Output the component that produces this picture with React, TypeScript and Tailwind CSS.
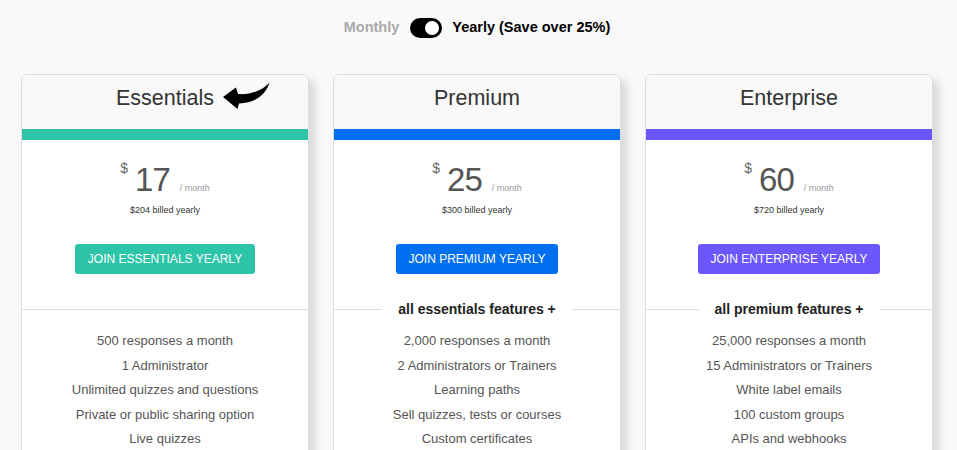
import React from "react";

type Plan = {
  name: string;
  bar: string;
  price: string;
  billed: string;
  button: string;
  heading?: string;
  features: string[];
  arrow?: boolean;
};

const plans: Plan[] = [
  {
    name: "Essentials",
    bar: "bg-[#2ec4a8]",
    price: "17",
    billed: "$204 billed yearly",
    button: "JOIN ESSENTIALS YEARLY",
    features: [
      "500 responses a month",
      "1 Administrator",
      "Unlimited quizzes and questions",
      "Private or public sharing option",
      "Live quizzes",
    ],
    arrow: true,
  },
  {
    name: "Premium",
    bar: "bg-[#0070f0]",
    price: "25",
    billed: "$300 billed yearly",
    button: "JOIN PREMIUM YEARLY",
    heading: "all essentials features +",
    features: [
      "2,000 responses a month",
      "2 Administrators or Trainers",
      "Learning paths",
      "Sell quizzes, tests or courses",
      "Custom certificates",
    ],
  },
  {
    name: "Enterprise",
    bar: "bg-[#6c56fd]",
    price: "60",
    billed: "$720 billed yearly",
    button: "JOIN ENTERPRISE YEARLY",
    heading: "all premium features +",
    features: [
      "25,000 responses a month",
      "15 Administrators or Trainers",
      "White label emails",
      "100 custom groups",
      "APIs and webhooks",
    ],
  },
];

function Arrow() {
  return (
    <svg
      width="52"
      height="28"
      viewBox="0 0 52 28"
      className="absolute left-full top-[-2px] ml-[6px]"
    >
      <path
        d="M3 15 L16 5.5 L18 12 C30 13 42 9 49.5 0.5 C46 12 36 21 19 21.5 L17.5 27 Z"
        fill="#000"
      />
    </svg>
  );
}

function Card({ p }: { p: Plan }) {
  return (
    <div className="w-[288px] shrink-0 rounded-[6px] border border-[#dddddd] bg-white shadow-[6px_6px_10px_rgba(0,0,0,0.13)] overflow-hidden">
      <div className="h-[54px] bg-[#f9f9f9] pt-[9px] text-center">
        <span className="relative inline-block text-[21.5px] leading-[28px] text-[#333]">
          {p.name}
          {p.arrow && <Arrow />}
        </span>
      </div>
      <div className={`h-[11px] ${p.bar}`} />
      <div className="pt-[23px] flex flex-col items-center">
        <div className="flex items-baseline">
          <span className="relative top-[-18px] text-[14px] leading-none text-[#666] mr-[7px]">$</span>
          <span className="text-[33px] leading-[34px] tracking-[-1px] text-[#555]">{p.price}</span>
          <span className="text-[9px] leading-none text-[#999] ml-[10px]">/ month</span>
        </div>
        <div className="mt-[7px] text-[9px] leading-[12px] text-[#333]">{p.billed}</div>
        <button
          className={`mt-[28px] h-[30px] px-[13px] rounded-[3px] ${p.bar} text-white text-[12px] leading-[30px]`}
        >
          {p.button}
        </button>
      </div>
      <div className="mt-[25px] flex items-center h-[20px]">
        <div className="flex-1 h-px bg-[#dddddd]" />
        {p.heading && (
          <>
            <span className="mx-[16px] text-[14px] font-bold text-[#222] leading-[20px]">{p.heading}</span>
            <div className="flex-1 h-px bg-[#dddddd]" />
          </>
        )}
      </div>
      <ul className="mt-[10px] pb-[20px] text-center text-[13px] leading-[24.6px] text-[#555]">
        {p.features.map((f) => (
          <li key={f}>{f}</li>
        ))}
      </ul>
    </div>
  );
}

export default function App() {
  return (
    <div
      className="min-h-[450px] bg-[#f9f9f9] pt-[18px]"
      style={{ fontFamily: '"Liberation Sans", Arial, sans-serif' }}
    >
      <div className="flex items-center justify-center h-[20px] pr-[3px]">
        <span className="text-[14.5px] font-bold text-[#aaaaaa]">Monthly</span>
        <div className="ml-[11px] mr-[10px] w-[32px] h-[20px] rounded-full bg-black flex items-center justify-end pr-[3px]">
          <div className="w-[14px] h-[14px] rounded-full bg-white" />
        </div>
        <span className="text-[14.5px] font-bold text-black">Yearly (Save over 25%)</span>
      </div>
      <div className="mt-[36px] flex pl-[21px] gap-[24px]">
        {plans.map((p) => (
          <Card key={p.name} p={p} />
        ))}
      </div>
    </div>
  );
}
